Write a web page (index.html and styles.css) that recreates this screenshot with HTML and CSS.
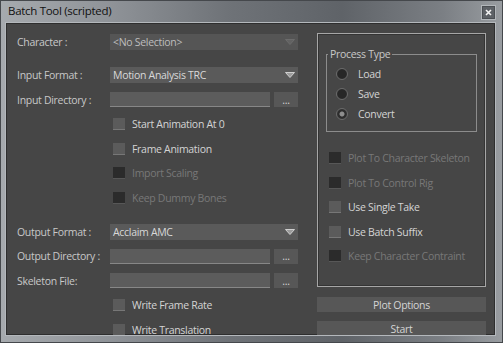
FILE: index.html
```html
<!DOCTYPE html>
<html lang="en">
<head>
    <meta charset="UTF-8">
    <title>Batch Tool (scripted)</title>
    <link rel="stylesheet" href="styles.css">
</head>
<body>
    <div class="window">
        <!-- Title bar -->
        <div class="titlebar">
            <span class="title">Batch Tool (scripted)</span>
            <button class="close-btn">
                <svg width="7" height="7" viewBox="0 0 7 7">
                    <path d="M1 1 L6 6 M6 1 L1 6" stroke="#f4f4f4" stroke-width="1.6"/>
                </svg>
            </button>
        </div>

        <div class="client">
            <!-- Left column -->
            <div class="left-col">
                <div class="row">
                    <span class="field-label">Character :</span>
                    <div class="dropdown disabled">
                        <span>&lt;No Selection&gt;</span>
                        <svg class="arrow" width="10" height="6" viewBox="0 0 10 6"><path d="M0.5 0.5 H9.5 L5 5.5 Z"/></svg>
                    </div>
                </div>

                <div class="fields-input">
                    <div class="row">
                        <span class="field-label">Input Format :</span>
                        <div class="dropdown">
                            <span>Motion Analysis TRC</span>
                            <svg class="arrow" width="10" height="6" viewBox="0 0 10 6"><path d="M0.5 0.5 H9.5 L5 5.5 Z"/></svg>
                        </div>
                    </div>
                    <div class="row">
                        <span class="field-label">Input Directory :</span>
                        <input class="path-input" type="text">
                        <button class="browse-btn">...</button>
                    </div>
                    <div class="row check-row">
                        <input class="check" type="checkbox" id="start-anim">
                        <label for="start-anim">Start Animation At 0</label>
                    </div>
                    <div class="row check-row">
                        <input class="check" type="checkbox" id="frame-anim">
                        <label for="frame-anim">Frame Animation</label>
                    </div>
                    <div class="row check-row disabled">
                        <input class="check" type="checkbox" id="import-scaling" disabled>
                        <label for="import-scaling">Import Scaling</label>
                    </div>
                    <div class="row check-row disabled">
                        <input class="check" type="checkbox" id="dummy-bones" disabled>
                        <label for="dummy-bones">Keep Dummy Bones</label>
                    </div>
                </div>

                <div class="fields-output">
                    <div class="row">
                        <span class="field-label">Output Format :</span>
                        <div class="dropdown">
                            <span>Acclaim AMC</span>
                            <svg class="arrow" width="10" height="6" viewBox="0 0 10 6"><path d="M0.5 0.5 H9.5 L5 5.5 Z"/></svg>
                        </div>
                    </div>
                    <div class="row">
                        <span class="field-label">Output Directory :</span>
                        <input class="path-input" type="text">
                        <button class="browse-btn">...</button>
                    </div>
                    <div class="row">
                        <span class="field-label">Skeleton File:</span>
                        <input class="path-input" type="text">
                        <button class="browse-btn">...</button>
                    </div>
                    <div class="row check-row">
                        <input class="check" type="checkbox" id="frame-rate">
                        <label for="frame-rate">Write Frame Rate</label>
                    </div>
                    <div class="row check-row">
                        <input class="check" type="checkbox" id="translation">
                        <label for="translation">Write Translation</label>
                    </div>
                </div>
            </div>

            <!-- Right column -->
            <div class="right-col">
                <div class="options-box">
                    <fieldset class="process-type">
                        <legend>Process Type</legend>
                        <div class="radio-row">
                            <input class="radio" type="radio" name="process" id="load">
                            <label for="load">Load</label>
                        </div>
                        <div class="radio-row">
                            <input class="radio" type="radio" name="process" id="save">
                            <label for="save">Save</label>
                        </div>
                        <div class="radio-row">
                            <input class="radio" type="radio" name="process" id="convert" checked>
                            <label for="convert">Convert</label>
                        </div>
                    </fieldset>

                    <div class="option-list">
                        <div class="row option-row disabled">
                            <input class="check" type="checkbox" id="plot-skeleton" disabled>
                            <label for="plot-skeleton">Plot To Character Skeleton</label>
                        </div>
                        <div class="row option-row disabled">
                            <input class="check" type="checkbox" id="plot-rig" disabled>
                            <label for="plot-rig">Plot To Control Rig</label>
                        </div>
                        <div class="row option-row">
                            <input class="check" type="checkbox" id="single-take">
                            <label for="single-take">Use Single Take</label>
                        </div>
                        <div class="row option-row">
                            <input class="check" type="checkbox" id="batch-suffix">
                            <label for="batch-suffix">Use Batch Suffix</label>
                        </div>
                        <div class="row option-row disabled">
                            <input class="check" type="checkbox" id="keep-constraint" disabled>
                            <label for="keep-constraint">Keep Character Contraint</label>
                        </div>
                    </div>
                </div>

                <button class="action-btn">Plot Options</button>
                <button class="action-btn start-btn">Start</button>
            </div>
        </div>
    </div>
</body>
</html>
```

FILE: styles.css
```css
* {
    margin: 0;
    padding: 0;
    box-sizing: border-box;
    font-family: 'Open Sans', 'Noto Sans', sans-serif;
}

:root {
    --client-bg: #464646;
    --field-bg: #5a5a5a;
    --button-bg: #575757;
    --text-label: #c8c8c8;
    --text-primary: #d4d4d4;
    --text-disabled: #787878;
}

body {
    width: 503px;
    height: 343px;
    overflow: hidden;
    background-color: #2a2d30;
}

/* Window frame */
.window {
    width: 503px;
    height: 343px;
    display: flex;
    flex-direction: column;
    padding: 0 7px 7px 5px;
    background: linear-gradient(90deg, #a6aaae 0%, #8f9398 22%, #6f7378 45%, #5f6368 68%, #7b7f84 88%, #999da1 100%);
    box-shadow: inset 0 0 0 1px #45484c;
}

.titlebar {
    height: 22px;
    display: flex;
    justify-content: space-between;
    align-items: flex-start;
    padding-left: 3px;
}

.title {
    font-size: 11.5px;
    letter-spacing: -0.3px;
    line-height: 22px;
    color: #111111;
}

.close-btn {
    width: 15px;
    height: 15px;
    margin-top: 5px;
    display: flex;
    align-items: center;
    justify-content: center;
    background-color: #5d6166;
    border: 1px solid #b2b6ba;
    box-shadow: inset 0 0 0 1px #4a4e52;
}

/* Client area */
.client {
    flex: 1;
    display: flex;
    background-color: var(--client-bg);
    border: 1px solid #b4b8bc;
    box-shadow: inset 0 0 0 1px #2e2e2e;
    overflow: hidden;
    font-size: 10.5px;
    letter-spacing: -0.3px;
    color: var(--text-primary);
}

.client button,
.client input {
    font: inherit;
    letter-spacing: inherit;
    color: inherit;
}

.row {
    height: 24.5px;
    display: flex;
    align-items: center;
    flex-shrink: 0;
}

/* Left column */
.left-col {
    width: 311px;
    flex-shrink: 0;
    padding: 7px 0 0 11px;
    display: flex;
    flex-direction: column;
}

.fields-input {
    margin-top: 8.25px;
}

.fields-output {
    margin-top: 9.5px;
}

.field-label {
    width: 93px;
    color: var(--text-label);
}

.dropdown {
    width: 188px;
    height: 16px;
    display: flex;
    align-items: center;
    justify-content: space-between;
    padding: 0 3px 0 3px;
    background-color: var(--field-bg);
    color: #d8d8d8;
}

.dropdown .arrow path {
    fill: #9c9c9c;
    stroke: #cfcfcf;
    stroke-width: 1;
}

.dropdown.disabled {
    background-color: #555555;
    color: #bdbdbd;
}

.dropdown.disabled .arrow path {
    fill: #626262;
    stroke: #6c6c6c;
}

.path-input {
    width: 160px;
    height: 15px;
    border: none;
    border-bottom: 1px solid #878787;
    background-color: #5c5c5c;
    outline: none;
}

.browse-btn {
    width: 24px;
    height: 15px;
    margin-left: 4px;
    border: none;
    background-color: var(--button-bg);
    line-height: 18px;
    color: #c4c4c4;
    overflow: hidden;
}

.check-row {
    padding-left: 96px;
    gap: 7px;
}

.check {
    appearance: none;
    width: 12px;
    height: 12px;
    flex-shrink: 0;
    background-color: #5b5b5b;
    border-bottom: 1px solid #777777;
}

.check:disabled {
    background-color: #2b2b2b;
    border-bottom-color: #575757;
}

.disabled label {
    color: var(--text-disabled);
}

/* Right column */
.right-col {
    width: 169px;
    flex-shrink: 0;
    padding-top: 10px;
    display: flex;
    flex-direction: column;
}

.options-box {
    height: 254px;
    flex-shrink: 0;
    border: 1px solid #a6a6a6;
    box-shadow: inset 0 0 0 1px #343434;
}

.process-type {
    margin: 13px 8px 0 8px;
    border: 1px solid #8c8c8c;
    padding: 3px 0 7px 0;
}

.process-type legend {
    margin-left: 1px;
    padding: 0 2px;
    line-height: 14px;
    color: var(--text-label);
}

.radio-row {
    height: 20px;
    display: flex;
    align-items: center;
    gap: 10px;
    padding-left: 9px;
}

.radio {
    appearance: none;
    width: 12px;
    height: 12px;
    flex-shrink: 0;
    border-radius: 50%;
    border: 1px solid #6a6a6a;
    background: radial-gradient(circle, #272727 55%, #3c3c3c 100%);
}

.radio:checked {
    background: radial-gradient(circle, #8e8e8e 0, #8e8e8e 2px, #2a2a2a 3px, #3c3c3c 100%);
}

.option-list {
    margin-top: 13.75px;
    padding-left: 11px;
}

.option-row {
    gap: 7px;
}

.action-btn {
    height: 15px;
    margin-top: 10px;
    flex-shrink: 0;
    border: none;
    background-color: var(--button-bg);
    color: #d0d0d0;
}

.start-btn {
    margin-top: 9px;
}
```
